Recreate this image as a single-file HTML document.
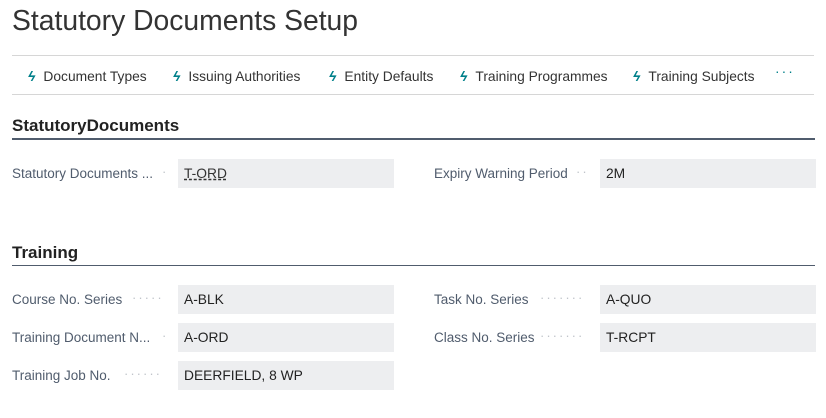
<!DOCTYPE html>
<html><head><meta charset="utf-8"><style>
body{margin:0;width:826px;height:418px;background:#fff;font-family:"Liberation Sans",sans-serif;position:relative;overflow:hidden;color:#212121}
.a{position:absolute;white-space:nowrap}
.title{left:12px;top:4px;font-size:28.3px;font-weight:300;color:#333}
.hl{position:absolute;left:12px;width:802px;height:1px;background:#d6d6d6}
.act{top:68px;font-size:13.8px;color:#333}
.bolt{color:#00808a;font-weight:bold;font-style:italic;margin-right:8px;font-size:14px}
.sh{left:12px;font-size:17px;font-weight:bold;color:#222}
.sl{position:absolute;left:12px;width:803px;background:#505c6d}
.lbl{font-size:13.5px;color:#505c6d}
.dots{position:absolute;font-size:13px;color:#c0c4ca;letter-spacing:2px}
.inp{position:absolute;width:216px;height:29px;background:#edeef0;font-size:13.8px;line-height:29px;box-sizing:border-box;padding-left:6px;color:#222}
</style></head><body>
<div class="a title">Statutory Documents Setup</div>
<div class="hl" style="top:55px"></div>
<div class="a act" style="left:28px"><span class="bolt">ϟ</span>Document Types</div>
<div class="a act" style="left:173px"><span class="bolt">ϟ</span>Issuing Authorities</div>
<div class="a act" style="left:329px"><span class="bolt">ϟ</span>Entity Defaults</div>
<div class="a act" style="left:460px"><span class="bolt">ϟ</span>Training Programmes</div>
<div class="a act" style="left:633px"><span class="bolt">ϟ</span>Training Subjects</div>
<div class="a act" style="left:775px;color:#00808a;letter-spacing:2px;top:64px">···</div>
<div class="hl" style="top:94px"></div>

<div class="a sh" style="top:116px">StatutoryDocuments</div>
<div class="sl" style="top:138px;height:2px"></div>
<div class="a lbl" style="left:12px;top:166px">Statutory Documents ...</div>
<div class="dots" style="left:162px;top:164px">·</div>
<div class="inp" style="left:178px;top:159px"><span style="text-decoration:underline dashed;color:#333">T-ORD</span></div>
<div class="a lbl" style="left:434px;top:166px">Expiry Warning Period</div>
<div class="dots" style="left:576px;top:164px">··</div>
<div class="inp" style="left:600px;top:159px">2M</div>

<div class="a sh" style="top:243px">Training</div>
<div class="sl" style="top:265px;height:1px"></div>
<div class="a lbl" style="left:12px;top:292px">Course No. Series</div>
<div class="dots" style="left:132px;top:290px">·····</div>
<div class="inp" style="left:178px;top:285px">A-BLK</div>
<div class="a lbl" style="left:12px;top:330px">Training Document N...</div>
<div class="dots" style="left:162px;top:328px">·</div>
<div class="inp" style="left:178px;top:323px">A-ORD</div>
<div class="a lbl" style="left:12px;top:368px">Training Job No.</div>
<div class="dots" style="left:124px;top:366px">······</div>
<div class="inp" style="left:178px;top:361px">DEERFIELD, 8 WP</div>

<div class="a lbl" style="left:434px;top:292px">Task No. Series</div>
<div class="dots" style="left:540px;top:290px">·······</div>
<div class="inp" style="left:600px;top:285px">A-QUO</div>
<div class="a lbl" style="left:434px;top:330px">Class No. Series</div>
<div class="dots" style="left:540px;top:328px">·······</div>
<div class="inp" style="left:600px;top:323px">T-RCPT</div>
</body></html>
